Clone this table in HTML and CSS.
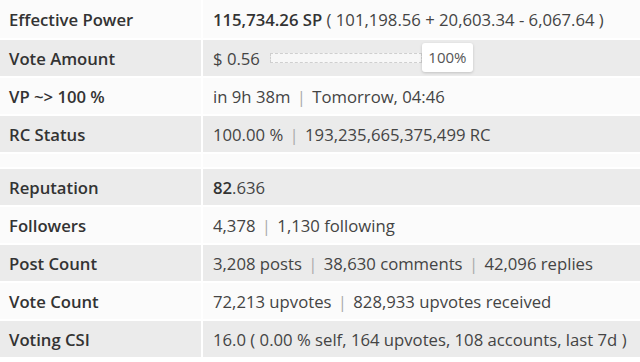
FILE: index.html
```html
<!DOCTYPE html>
<html>
<head>
<meta charset="utf-8">
<link rel="stylesheet" href="styles.css">
</head>
<body>
<table class="stats">
  <tr class="odd first">
    <th>Effective Power</th>
    <td><b>115,734.26 SP</b> ( 101,198.56 + 20,603.34 - 6,067.64 )</td>
  </tr>
  <tr class="even">
    <th>Vote Amount</th>
    <td>
      <div class="vote">
        <span>$ 0.56</span>
        <div class="slider">
          <div class="bar"></div>
          <div class="tip">100%</div>
        </div>
      </div>
    </td>
  </tr>
  <tr class="odd">
    <th>VP ~&gt; 100 %</th>
    <td>in 9h 38m <span class="sep">|</span> Tomorrow, 04:46</td>
  </tr>
  <tr class="even">
    <th>RC Status</th>
    <td>100.00 % <span class="sep">|</span> 193,235,665,375,499 RC</td>
  </tr>
  <tr class="spacer">
    <th></th>
    <td></td>
  </tr>
  <tr class="even">
    <th>Reputation</th>
    <td><b>82</b>.636</td>
  </tr>
  <tr class="odd">
    <th>Followers</th>
    <td>4,378 <span class="sep">|</span> 1,130 following</td>
  </tr>
  <tr class="even">
    <th>Post Count</th>
    <td>3,208 posts <span class="sep">|</span> 38,630 comments <span class="sep">|</span> 42,096 replies</td>
  </tr>
  <tr class="odd">
    <th>Vote Count</th>
    <td>72,213 upvotes <span class="sep">|</span> 828,933 upvotes received</td>
  </tr>
  <tr class="even">
    <th>Voting CSI</th>
    <td>16.0 ( 0.00 % self, 164 upvotes, 108 accounts, last 7d )</td>
  </tr>
</table>
</body>
</html>
```
FILE: styles.css
```css
html, body {
  margin: 0;
  padding: 0;
  background: #ffffff;
}
body {
  font-family: "Open Sans", "Noto Sans", sans-serif;
  font-size: 16.7px;
  color: #3a3a3a;
  overflow: hidden;
}
.stats {
  border-collapse: separate;
  border-spacing: 2px;
  margin: -2px 0 0 -2px;
  width: calc(100% + 4px);
  table-layout: fixed;
}
.stats th,
.stats td {
  height: 36px;
  padding: 0 0 0 9px;
  text-align: left;
  vertical-align: middle;
  white-space: nowrap;
  overflow: hidden;
}
.stats th {
  width: 192px;
  font-weight: 600;
  color: #333;
}
.stats td {
  padding-left: 10px;
  color: #444;
}
.stats tr.first th,
.stats tr.first td {
  height: 38px;
}
.stats tr.odd th,
.stats tr.odd td {
  background: #fbfbfb;
}
.stats tr.even th,
.stats tr.even td {
  background: #ebebeb;
}
.stats tr.spacer th,
.stats tr.spacer td {
  height: 13px;
  background: #fbfbfb;
}
.stats b {
  font-weight: 600;
  color: #333;
}
.sep {
  color: #aaa;
  padding: 0 2px;
}
.vote {
  display: flex;
  align-items: center;
  gap: 10px;
}
.slider {
  position: relative;
  width: 210px;
  height: 10px;
}
.bar {
  height: 8px;
  border: 1px dashed #cfcfcf;
  background: #f7f7f7;
  width: 150px;
}
.tip {
  position: absolute;
  left: 152px;
  top: -10px;
  width: 51px;
  height: 29px;
  line-height: 29px;
  text-align: center;
  font-size: 15px;
  color: #555;
  background: #ffffff;
  border-radius: 3px;
  box-shadow: 0 1px 3px rgba(0,0,0,0.18);
}
```
